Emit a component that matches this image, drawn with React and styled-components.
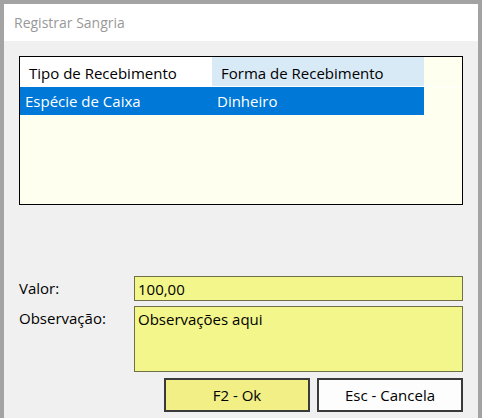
import React from "react";
import styled, { createGlobalStyle } from "styled-components";

const GlobalStyle = createGlobalStyle`
  html, body {
    margin: 0;
    padding: 0;
    background: #f0f0f0;
  }
  * {
    box-sizing: border-box;
  }
`;

const rows = [{ tipo: "Espécie de Caixa", forma: "Dinheiro" }];

const App = () => {
  return (
    <>
      <GlobalStyle />
      <Window>
        <TitleBar>Registrar Sangria</TitleBar>
        <Body>
          <Grid>
            <HeaderRow>
              <HeaderCell $width={192}>Tipo de Recebimento</HeaderCell>
              <HeaderCell $width={212} $active>
                Forma de Recebimento
              </HeaderCell>
            </HeaderRow>
            {rows.map((r) => (
              <DataRow key={r.tipo} $selected>
                <DataCell $width={192}>{r.tipo}</DataCell>
                <DataCell $width={212}>{r.forma}</DataCell>
              </DataRow>
            ))}
          </Grid>
          <Form>
            <Label>Valor:</Label>
            <Field $height={25}>100,00</Field>
            <Label>Observação:</Label>
            <Field $height={66}>Observações aqui</Field>
          </Form>
          <Buttons>
            <Button $primary>F2 - Ok</Button>
            <Button>Esc - Cancela</Button>
          </Buttons>
        </Body>
      </Window>
    </>
  );
};

export default App;

const Window = styled.div`
  width: 482px;
  height: 418px;
  display: flex;
  flex-direction: column;
  border: solid #a3a3a3;
  border-width: 4px 4px 0 4px;
  font-family: "Open Sans", "Noto Sans", sans-serif;
  font-size: 15px;
  color: #000;
`;

const TitleBar = styled.div`
  height: 37px;
  background: #ffffff;
  padding-left: 10px;
  display: flex;
  align-items: center;
  color: #999999;
  font-size: 14px;
`;

const Body = styled.div`
  flex: 1;
  background: #f0f0f0;
  padding: 15px 15px 0 15px;
  display: flex;
  flex-direction: column;
`;

const Grid = styled.div`
  height: 149px;
  border: 1px solid #000;
  background: #fffff0;
`;

const HeaderRow = styled.div`
  display: flex;
  height: 30px;
  border-bottom: 1px solid #ffffff;
`;

const HeaderCell = styled.div`
  width: ${(p) => p.$width}px;
  height: 29px;
  padding: 2px 0 0 9px;
  display: flex;
  align-items: center;
  background: ${(p) => (p.$active ? "#d9eaf7" : "#ffffff")};
  white-space: nowrap;
`;

const DataRow = styled.div`
  display: flex;
  height: 28px;
  width: 404px;
  background: ${(p) => (p.$selected ? "#0078d7" : "transparent")};
  color: ${(p) => (p.$selected ? "#ffffff" : "#000")};
`;

const DataCell = styled.div`
  width: ${(p) => p.$width}px;
  padding-left: 5px;
  display: flex;
  align-items: center;
  white-space: nowrap;
`;

const Form = styled.div`
  margin-top: 71px;
  display: grid;
  grid-template-columns: 115px 1fr;
  row-gap: 5px;
  align-items: start;
`;

const Label = styled.div`
  line-height: 25px;
`;

const Field = styled.div`
  height: ${(p) => p.$height}px;
  background: #f3f68a;
  border: 1px solid #707048;
  padding: 0 3px;
  line-height: 24px;
`;

const Buttons = styled.div`
  margin-top: 6px;
  display: flex;
  justify-content: flex-end;
  gap: 7px;
`;

const Button = styled.div`
  width: 146px;
  height: 34px;
  display: flex;
  align-items: center;
  justify-content: center;
  border: 2px solid #3a3a3a;
  background: ${(p) => (p.$primary ? "#f2ef87" : "#fdfdfd")};
`;
